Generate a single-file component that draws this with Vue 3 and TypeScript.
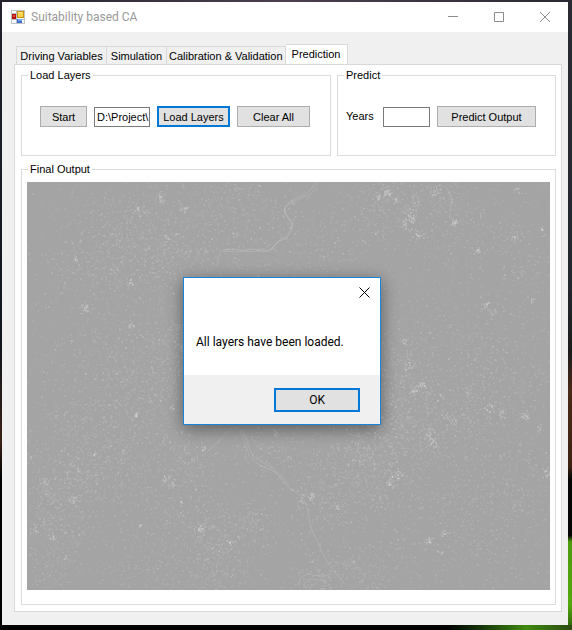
<script setup lang="ts">
import { ref } from 'vue'

const tabs = ['Driving Variables', 'Simulation', 'Calibration & Validation', 'Prediction']
const activeTab = ref('Prediction')
const layerPath = ref('D:\\Project\\')
const years = ref('')
const messageOpen = ref(true)

interface Cluster {
  x: number
  y: number
  spread: number
  count: number
  level: number
}

interface Layer {
  opacity: number
  d: string
}

const mapWidth = 523
const mapHeight = 408

// Small repeatable generator, so that the raster is the same on every load.
function createRandom(seed: number): () => number {
  let state = seed
  return () => {
    state = (state * 1664525 + 1013904223) % 4294967296
    return state / 4294967296
  }
}

const softClusters: number[][] = [
  [105, 45, 32, 420], [215, 15, 25, 200], [170, 50, 30, 260], [85, 75, 25, 150], [45, 75, 18, 70],
  [140, 70, 22, 150], [120, 105, 35, 220], [60, 100, 25, 110], [100, 165, 30, 260], [145, 160, 16, 220],
  [45, 190, 28, 120], [90, 210, 30, 210], [135, 200, 20, 140], [85, 245, 28, 260], [35, 245, 20, 120],
  [20, 290, 22, 180], [45, 310, 28, 300], [75, 285, 24, 180], [30, 340, 25, 180], [120, 310, 28, 190],
  [175, 340, 28, 320], [165, 285, 20, 180], [190, 380, 24, 300], [120, 395, 30, 180], [20, 385, 24, 160],
  [225, 340, 18, 180], [150, 245, 24, 160], [360, 35, 32, 240], [350, 15, 20, 120], [420, 15, 24, 140],
  [470, 55, 26, 130], [500, 85, 20, 90], [420, 60, 26, 110], [300, 70, 22, 90], [260, 45, 25, 120],
  [470, 150, 35, 180], [450, 175, 25, 120], [390, 160, 30, 150], [375, 190, 22, 170], [355, 225, 20, 260],
  [365, 260, 28, 340], [335, 265, 25, 260], [400, 240, 26, 220], [325, 300, 26, 280], [365, 310, 24, 170],
  [440, 245, 32, 200], [480, 280, 30, 200], [430, 310, 28, 150], [450, 350, 28, 140], [330, 395, 25, 260],
  [300, 325, 18, 120], [280, 290, 20, 120], [240, 265, 20, 160], [480, 375, 30, 120], [390, 365, 30, 110],
  [290, 385, 22, 150], [500, 310, 22, 120], [445, 215, 22, 140], [500, 200, 20, 90], [225, 80, 25, 90],
]

const brightSpots: number[][] = [
  [133, 15, 5, 18], [157, 26, 3, 10], [110, 28, 5, 15], [139, 55, 3, 8], [48, 77, 3, 10], [58, 126, 4, 24],
  [104, 99, 3, 12], [104, 142, 4, 12], [359, 10, 4, 26], [369, 18, 2, 8], [350, 13, 4, 12], [384, 35, 7, 30],
  [377, 42, 5, 16], [391, 52, 4, 18], [408, 10, 6, 20], [427, 40, 3, 18], [450, 68, 3, 18], [487, 56, 4, 12],
  [489, 7, 2, 6], [514, 46, 2, 6], [459, 122, 4, 16], [465, 131, 3, 8], [505, 118, 2, 7], [377, 158, 4, 16],
  [382, 182, 5, 16], [393, 203, 5, 24], [387, 209, 3, 12], [413, 212, 1, 5], [419, 233, 3, 9], [402, 253, 8, 24],
  [406, 259, 6, 18], [369, 293, 5, 22], [362, 300, 4, 14], [497, 233, 4, 20], [474, 231, 4, 12], [512, 245, 3, 8],
  [519, 290, 5, 20], [284, 314, 3, 18], [309, 324, 3, 9], [402, 358, 4, 20], [416, 350, 3, 9], [414, 371, 2, 8],
  [109, 232, 2, 12], [144, 226, 3, 10], [176, 266, 2, 8], [138, 295, 3, 14], [145, 302, 4, 14], [17, 299, 3, 16],
  [67, 271, 2, 7], [51, 288, 2, 7], [45, 316, 4, 12], [7, 347, 4, 12], [172, 346, 4, 24], [26, 354, 4, 10],
  [38, 375, 2, 6], [153, 319, 1, 6], [204, 361, 3, 8], [112, 343, 1, 5], [208, 52, 3, 8], [280, 108, 2, 6],
  [325, 105, 2, 6], [247, 250, 2, 8], [270, 320, 6, 10], [425, 240, 3, 8], [440, 210, 3, 8], [462, 225, 5, 14],
]

function buildRaster(): Layer[] {
  const random = createRandom(20187)
  const opacities = [0.06, 0.09, 0.12, 0.18, 0.26]
  const paths = opacities.map((): string[] => [])

  const dot = (x: number, y: number, level: number) => {
    const px = Math.round(x)
    const py = Math.round(y)
    if (px < 0 || py < 0 || px >= mapWidth || py >= mapHeight) return
    const width = random() < 0.6 ? 2 : 1
    const height = random() < 0.6 ? 2 : 1
    paths[level].push(`M${px} ${py}h${width}v${height}h-${width}z`)
  }
  const spread = () => random() + random() + random() - 1.5
  const scatter = (c: Cluster) => {
    for (let i = 0; i < c.count; i++) {
      const step = random() < 0.3 ? 1 : 0
      dot(c.x + spread() * c.spread * 1.6, c.y + spread() * c.spread * 1.6, Math.min(4, c.level + step))
    }
  }

  for (let i = 0; i < 2600; i++) {
    dot(random() * mapWidth, random() * mapHeight, random() < 0.85 ? 0 : 1)
  }
  for (const [x, y, size, count] of softClusters) {
    scatter({ x, y, spread: size, count: Math.round(count * 0.75), level: 0 })
    scatter({ x, y, spread: size, count: Math.round(count * 0.24), level: 1 })
    scatter({ x, y, spread: size * 0.8, count: Math.round(count * 0.05), level: 2 })
  }
  for (const [x, y, size, count] of brightSpots) {
    scatter({ x, y, spread: size * 0.8, count: Math.round(count * 0.8), level: 2 })
    scatter({ x, y, spread: size * 0.5, count: Math.round(count * 0.3), level: 3 })
  }
  return opacities.map((opacity, i) => ({ opacity, d: paths[i].join('') }))
}

const raster = buildRaster()

const channels = [
  'M290 0Q290 8 283 12Q270 18 262 22Q254 28 260 34Q269 42 264 50Q260 57 252 59Q247 64 244 68',
  'M287 2Q285 9 276 13Q262 18 257 27Q258 34 264 40Q266 48 259 54Q248 61 243 68',
  'M246 66Q240 71 232 69Q222 71 212 68Q200 66 195 69Q190 74 191 84',
  'M242 69L226 67L210 70L199 69',
  'M213 248Q218 262 222 273Q229 283 240 286Q250 290 254 297Q262 307 270 311Q280 318 282 336Q284 350 291 360Q297 377 307 389L318 402',
  'M216 248Q222 266 226 274Q236 281 246 286Q254 293 262 303',
  'M272 404Q270 394 282 392Q293 396 304 392',
  'M277 406Q276 398 284 397L300 399',
  'M418 4Q424 10 425 18L423 28M386 14h5v10h-5zM379 22v6h4v-4',
  'M318 232Q326 240 319 248Q326 256 336 254Q326 264 334 274Q342 268 343 280',
  'M180 270L196 255L205 246',
  'M342 128L356 114',
]
</script>

<template>
  <div class="desktop">
    <main class="window">
      <header class="titlebar">
        <svg class="app-icon" viewBox="0 0 14 14" aria-hidden="true">
          <rect x="0.5" y="0.5" width="13" height="13" fill="#fff" stroke="#c4c4c4" />
          <path d="M5.5 0v14M0 9.5h14M0 3.5h6" stroke="#b9bcc4" fill="none" />
          <rect x="1" y="4" width="4" height="5" fill="#b5100c" />
          <rect x="2" y="5" width="2" height="2" fill="#e0503a" />
          <rect x="6.5" y="1.5" width="6" height="6" fill="#fbd24c" stroke="#c89410" />
          <path d="M7 2h4v1H7z" fill="#ffeb9e" />
          <rect x="6" y="9" width="5" height="4" fill="#3b6fd4" />
          <rect x="7" y="9" width="4" height="2" fill="#78a8f4" />
        </svg>
        <h1 class="title">Suitability based CA</h1>
        <div class="caption-buttons">
          <button type="button" aria-label="Minimize">
            <svg viewBox="0 0 10 10"><path d="M0 4.5h10" /></svg>
          </button>
          <button type="button" aria-label="Maximize">
            <svg viewBox="0 0 10 10"><path d="M.5 .5h9v9h-9z" /></svg>
          </button>
          <button type="button" aria-label="Close">
            <svg viewBox="0 0 10 10"><path d="M0 0l10 10M10 0L0 10" /></svg>
          </button>
        </div>
      </header>

      <div class="client">
        <div class="tabs" role="tablist">
          <button
            v-for="tab in tabs"
            :key="tab"
            type="button"
            role="tab"
            class="tab"
            :class="{ active: tab === activeTab }"
            :aria-selected="tab === activeTab"
            @click="activeTab = tab"
          >{{ tab }}</button>
        </div>

        <section class="page" role="tabpanel">
          <div class="groups">
            <fieldset class="group">
              <legend>Load Layers</legend>
              <div class="controls load">
                <button type="button" class="btn start">Start</button>
                <input v-model="layerPath" class="box path" type="text" aria-label="Layer path" />
                <button type="button" class="btn wide focused" @click="messageOpen = true">Load Layers</button>
                <button type="button" class="btn wide" @click="layerPath = ''">Clear All</button>
              </div>
            </fieldset>
            <fieldset class="group">
              <legend>Predict</legend>
              <div class="controls predict">
                <label for="years">Years</label>
                <input id="years" v-model="years" class="box years" type="text" />
                <button type="button" class="btn output">Predict Output</button>
              </div>
            </fieldset>
          </div>

          <fieldset class="group result">
            <legend>Final Output</legend>
            <svg class="map" viewBox="0 0 523 408" preserveAspectRatio="xMidYMid slice" aria-hidden="true">
              <rect width="523" height="408" fill="#a4a4a4" />
              <path v-for="layer in raster" :key="layer.opacity" :d="layer.d" :opacity="layer.opacity" fill="#fff" />
              <path v-for="channel in channels" :key="channel" :d="channel" class="channel" />
            </svg>
          </fieldset>
        </section>
      </div>
    </main>

    <div v-if="messageOpen" class="message" role="dialog" aria-labelledby="message-text">
      <div class="message-body">
        <button type="button" class="message-close" aria-label="Close" @click="messageOpen = false">
          <svg viewBox="0 0 11 11"><path d="M.5 .5l10 10M10.5 .5l-10 10" /></svg>
        </button>
        <p id="message-text">All layers have been loaded.</p>
      </div>
      <footer class="message-actions">
        <button type="button" class="btn focused ok" @click="messageOpen = false">OK</button>
      </footer>
    </div>
  </div>
</template>

<style>
body {
  margin: 0;
}
</style>

<style scoped>
* {
  box-sizing: border-box;
}

.desktop {
  position: relative;
  display: flex;
  min-height: 100vh;
  padding: 2px 4px 5px 2px;
  font-family: "Liberation Sans", Arial, sans-serif;
  font-size: 11px;
  line-height: 13px;
  color: #000;
  background:
    linear-gradient(to right, #000 78%, #15330a 84%, #3f8a10 92%, #2c4a12) bottom / 100% 5px no-repeat,
    linear-gradient(to bottom, #2b2a33 0%, #22272e 45%, #1d1c1c 56%, #4a2a18 62%, #3d2212 74%, #050505 76%, #050505 85%, #4f9a10 86%, #54a80d 96%, #2c5a0c 100%) right / 4px 100% no-repeat,
    linear-gradient(to right, #24222b, #4a4150 50%, #2b2831) top / 100% 2px no-repeat,
    linear-gradient(to bottom, #22232c 0%, #10151d 55%, #3a2114 70%, #000 76%) left / 2px 100% no-repeat,
    #000;
}

button,
input {
  font: inherit;
  color: inherit;
  margin: 0;
}

.window {
  display: flex;
  flex: 1;
  flex-direction: column;
  min-width: 0;
  background: #f0f0f0;
}

.titlebar {
  display: flex;
  align-items: center;
  height: 30px;
  padding-left: 9px;
  background: #fff;
}

.app-icon {
  width: 14px;
  height: 14px;
}

.title {
  flex: 1;
  margin: 0 0 0 6px;
  font-family: Roboto, "Open Sans", sans-serif;
  font-size: 12px;
  font-weight: 400;
  line-height: 16px;
  color: #999;
}

.caption-buttons {
  display: flex;
}

.caption-buttons button {
  display: grid;
  place-items: center;
  width: 46px;
  height: 30px;
  padding: 0;
  border: 0;
  background: none;
}

.caption-buttons svg {
  width: 10px;
  height: 10px;
}

.caption-buttons path {
  fill: none;
  stroke: #8c8c8c;
}

.client {
  display: flex;
  flex: 1;
  flex-direction: column;
  padding: 12px 6px 13px 12px;
}

.tabs {
  display: flex;
  align-items: flex-end;
  padding-left: 2px;
}

.tab {
  height: 18px;
  padding: 2px 2px 0;
  border: 1px solid #d9d9d9;
  border-bottom: 0;
  border-left-width: 0;
  background: #f0f0f0;
  white-space: nowrap;
}

.tab:nth-child(1) {
  min-width: 91px;
  border-left-width: 1px;
}

.tab:nth-child(2) {
  min-width: 60px;
}

.tab:nth-child(3) {
  min-width: 118px;
}

.tab.active {
  height: 21px;
  min-width: 62px;
  margin-bottom: -1px;
  padding: 0 2px 2px;
  background: #fff;
}

.page {
  display: flex;
  flex: 1;
  flex-direction: column;
  gap: 7px;
  padding: 4px 5px 6px 6px;
  border: 1px solid #d9d9d9;
  background: #fff;
}

.groups {
  display: grid;
  grid-template-columns: minmax(0, 310fr) minmax(0, 219fr);
  gap: 6px;
}

.group {
  min-width: 0;
  margin: 0;
  padding: 0;
  border: 1px solid #dcdcdc;
}

.group legend {
  margin-left: 6px;
  padding: 0 2px;
}

.controls {
  display: flex;
  align-items: center;
  gap: 7px;
  padding: 24px 0 28px;
}

.load {
  padding-left: 18px;
}

.predict {
  padding-left: 8px;
}

.predict label {
  width: 30px;
}

.btn {
  height: 21px;
  padding: 2px 0 0;
  border: 1px solid #adadad;
  background: #e1e1e1;
  text-align: center;
  white-space: nowrap;
}

.btn.focused {
  border: 2px solid #0078d7;
}

.box {
  height: 20px;
  padding: 0 0 0 2px;
  border: 1px solid #7a7a7a;
  border-radius: 0;
  background: #fff;
  outline: 0;
}

.start,
.years {
  width: 47px;
}

.path {
  width: 56px;
}

.wide {
  width: 73px;
}

.output {
  width: 99px;
}

.result {
  display: flex;
  flex: 1;
  flex-direction: column;
  padding: 6px 5px 14px;
}

.result legend {
  margin-left: 1px;
}

.map {
  display: block;
  flex: 1;
  width: 100%;
  min-height: 0;
}

.channel {
  fill: none;
  stroke: #fff;
  stroke-opacity: 0.14;
}

.message {
  position: absolute;
  top: 44%;
  left: 32%;
  width: 198px;
  border: 1px solid #1883d7;
  background: #fff;
  box-shadow: 0 4px 16px rgba(0, 0, 0, 0.45);
  font-family: Roboto, "Open Sans", sans-serif;
  font-size: 12px;
  line-height: 16px;
}

.message-body {
  display: flex;
  flex-direction: column;
  height: 97px;
}

.message-close {
  align-self: flex-end;
  display: grid;
  place-items: center;
  width: 31px;
  height: 28px;
  padding: 0;
  border: 0;
  background: none;
}

.message-close svg {
  width: 11px;
  height: 11px;
}

.message-close path {
  stroke: #000;
}

.message p {
  margin: 28px 0 0 12px;
  white-space: nowrap;
}

.message-actions {
  display: flex;
  justify-content: flex-end;
  padding: 13px 20px 12px;
  background: #f0f0f0;
}

.ok {
  width: 86px;
  height: 24px;
  padding: 0;
}
</style>
